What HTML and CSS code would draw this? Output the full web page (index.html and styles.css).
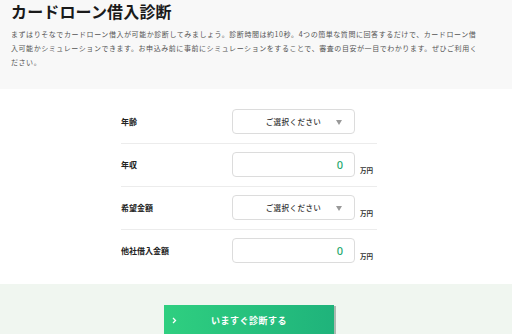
FILE: index.html
```html
<!DOCTYPE html>
<html lang="ja">
<head>
<meta charset="utf-8">
<title>カードローン借入診断</title>
<link rel="stylesheet" href="styles.css">
</head>
<body>
<section class="intro">
  <h1 class="title">カードローン借入診断</h1>
  <p class="lead">まずはりそなでカードローン借入が可能か診断してみましょう。診断時間は約10秒。4つの簡単な質問に回答するだけで、カードローン借入可能かシミュレーションできます。お申込み前に事前にシミュレーションをすることで、審査の目安が一目でわかります。ぜひご利用ください。</p>
</section>
<section class="form">
  <div class="row">
    <div class="label">年齢</div>
    <div class="box select"><span class="select-text">ご選択ください</span><span class="arrow"></span></div>
  </div>
  <div class="row">
    <div class="label">年収</div>
    <div class="box input">0</div>
    <div class="unit">万円</div>
  </div>
  <div class="row">
    <div class="label">希望金額</div>
    <div class="box select"><span class="select-text">ご選択ください</span><span class="arrow"></span></div>
    <div class="unit">万円</div>
  </div>
  <div class="row">
    <div class="label">他社借入金額</div>
    <div class="box input">0</div>
    <div class="unit">万円</div>
  </div>
</section>
<section class="action">
  <button class="cta" type="button">
    <svg class="chev" width="5" height="7" viewBox="0 0 5 7"><polyline points="1,1 3.5,3.5 1,6" fill="none" stroke="#fff" stroke-width="1.3"/></svg>
    <span class="cta-text">いますぐ診断する</span>
  </button>
</section>
</body>
</html>
```

FILE: styles.css
```css
* { box-sizing: border-box; }
html, body { margin: 0; padding: 0; }
body {
  width: 512px;
  height: 334px;
  overflow: hidden;
  background: #fff;
  font-family: "Noto Sans CJK JP", "Noto Sans", sans-serif;
  color: #222;
}
.intro {
  background: #f8f8f8;
  height: 89px;
  padding: 0 0 0 11px;
}
.title {
  margin: 0;
  font-size: 16px;
  line-height: 22px;
  font-weight: 700;
  color: #1a1a1a;
  letter-spacing: 0.15px;
}
.lead {
  margin: 5px 0 0;
  width: 469px;
  font-size: 7px;
  line-height: 14px;
  letter-spacing: 0.56px;
  color: #555;
}
.form {
  width: 256px;
  margin-left: 121px;
  padding: 12px 0;
}
.row {
  display: flex;
  align-items: center;
  padding: 8px 0 9px;
  border-bottom: 1px solid #ececec;
}
.row:last-child { border-bottom: none; }
.label {
  width: 111px;
  font-size: 8px;
  font-weight: 700;
  color: #222;
}
.box {
  width: 123px;
  height: 25px;
  border: 1px solid #dcdcdc;
  border-radius: 4px;
  background: #fff;
}
.select {
  position: relative;
  display: flex;
  align-items: center;
  justify-content: center;
}
.select-text {
  font-size: 7.5px;
  letter-spacing: 0.45px;
  font-weight: 500;
  color: #333;
}
.arrow {
  position: absolute;
  right: 12px;
  top: 10px;
  width: 0;
  height: 0;
  border-left: 3px solid transparent;
  border-right: 3px solid transparent;
  border-top: 5px solid #999;
}
.input {
  display: flex;
  align-items: center;
  justify-content: flex-end;
  padding-right: 11px;
  font-family: "Noto Sans", sans-serif;
  font-size: 11px;
  font-weight: 500;
  color: #24a86e;
}
.unit {
  align-self: flex-end;
  margin: 0 0 2px 5px;
  font-size: 6.5px;
  line-height: 9px;
  font-weight: 700;
  color: #333;
}
.action {
  background: #f0f6f0;
  height: 60px;
  padding-top: 21px;
  display: flex;
  justify-content: center;
  padding-right: 14px;
}
.cta {
  position: relative;
  width: 170px;
  height: 30px;
  border: none;
  padding: 0;
  background: linear-gradient(to right, #2fcf80, #1fb37b);
  box-shadow: 2px 1px 0 rgba(90, 110, 100, 0.45);
  display: flex;
  align-items: center;
  justify-content: center;
  font-family: "Noto Sans CJK JP", sans-serif;
}
.chev {
  position: absolute;
  left: 8px;
  top: 12px;
}
.cta-text {
  color: #fff;
  font-size: 9px;
  font-weight: 700;
  letter-spacing: 0.5px;
}
```
